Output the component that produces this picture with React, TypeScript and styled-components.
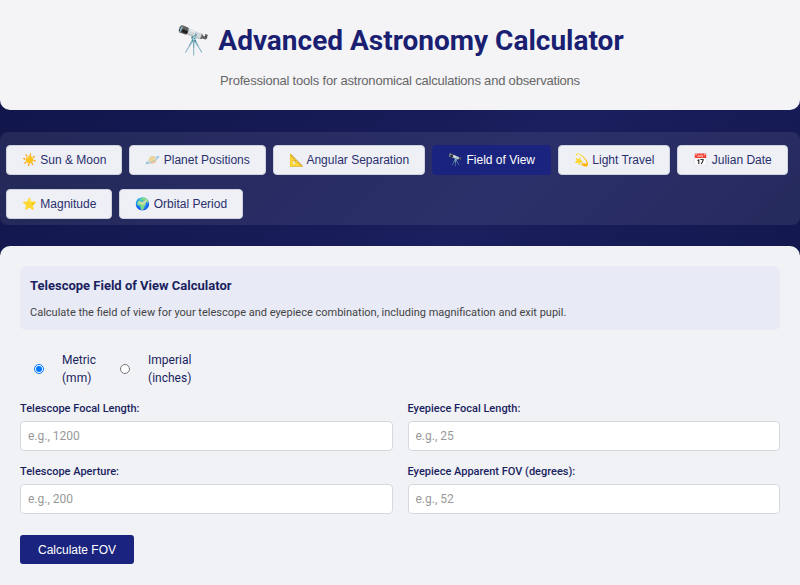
import React from "react";
import styled, { createGlobalStyle } from "styled-components";

const Global = createGlobalStyle`
  html, body { margin: 0; padding: 0; }
  body {
    font-family: Roboto, "Noto Sans", sans-serif;
    background: linear-gradient(135deg, #0f1447 0%, #1a1f5e 50%, #0c1240 100%);
    min-height: 585px;
  }
`;

const Header = styled.header`
  background: #f4f4f7;
  border-radius: 0 0 10px 10px;
  height: 110px;
  box-sizing: border-box;
  padding-top: 22px;
  text-align: center;
`;
const Title = styled.h1`
  margin: 0;
  font-size: 28px;
  font-weight: 700;
  color: #1a1f71;
  line-height: 38px;
`;
const Subtitle = styled.p`
  margin: 13px 0 0;
  font-size: 13px;
  letter-spacing: -0.2px;
  color: #666;
  font-family: "Liberation Sans", Arial, sans-serif;
`;
const TabBar = styled.nav`
  margin-top: 22px;
  background: rgba(255, 255, 255, 0.08);
  border-radius: 8px;
  padding: 13px 6px 6px;
  display: flex;
  flex-wrap: wrap;
  gap: 13px 7px;
  height: 93px;
  box-sizing: border-box;
`;
const Tab = styled.button<{ $active?: boolean }>`
  height: 30px;
  padding: 0 15px;
  border-radius: 4px;
  border: 1px solid ${p => (p.$active ? "#1a237e" : "#cfd2dc")};
  background: ${p => (p.$active ? "#1a237e" : "#eef0f5")};
  color: ${p => (p.$active ? "#fff" : "#2a2f6e")};
  font-family: "Liberation Sans", Arial, sans-serif;
  font-size: 12px;
  cursor: pointer;
`;
const Main = styled.main`
  margin-top: 21px;
  background: #f1f2f6;
  border-radius: 10px 10px 0 0;
  padding: 20px 20px 20px;
  min-height: 339px;
  box-sizing: border-box;
`;
const Info = styled.section`
  background: #e8eaf6;
  border-radius: 6px;
  padding: 12px 10px 10px;
  height: 64px;
  box-sizing: border-box;
`;
const InfoTitle = styled.h2`
  margin: 0;
  font-size: 13px;
  font-weight: 700;
  color: #1a1f5e;
`;
const InfoText = styled.p`
  margin: 13px 0 0;
  font-size: 11px;
  color: #444;
`;
const Radios = styled.div`
  display: flex;
  align-items: center;
  padding: 17px 0 0 14px;
  height: 44px;
`;
const RadioLabel = styled.label`
  display: flex;
  align-items: center;
  font-size: 12px;
  color: #1a1f5e;
  line-height: 18px;
  margin-right: 24px;
  input { margin: 0 18px 0 0; width: 10px; height: 10px; }
`;
const Grid = styled.div`
  display: grid;
  grid-template-columns: 1fr 1fr;
  gap: 14px 15px;
  margin-top: 11px;
`;
const Field = styled.div`
  display: flex;
  flex-direction: column;
  gap: 6px;
`;
const Label = styled.label`
  font-size: 11px;
  font-weight: 500;
  color: #1a1f5e;
`;
const Input = styled.input`
  height: 30px;
  box-sizing: border-box;
  border: 1px solid #d6d8e0;
  border-radius: 4px;
  background: #fff;
  padding: 0 7px;
  font-family: Roboto, sans-serif;
  font-size: 12px;
  &::placeholder { color: #999; }
`;
const Button = styled.button`
  margin-top: 21px;
  height: 29px;
  width: 114px;
  background: #1a237e;
  color: #fff;
  border: none;
  border-radius: 3px;
  font-family: "Liberation Sans", Arial, sans-serif;
  font-size: 12px;
`;

const tabs = ["☀️ Sun & Moon", "🪐 Planet Positions", "📐 Angular Separation", "🔭 Field of View", "💫 Light Travel", "📅 Julian Date", "⭐ Magnitude", "🌍 Orbital Period"];

export default function App() {
  return (
    <>
      <Global />
      <Header>
        <Title>🔭 Advanced Astronomy Calculator</Title>
        <Subtitle>Professional tools for astronomical calculations and observations</Subtitle>
      </Header>
      <TabBar>
        {tabs.map(t => <Tab key={t} $active={t.includes("Field")}>{t}</Tab>)}
      </TabBar>
      <Main>
        <Info>
          <InfoTitle>Telescope Field of View Calculator</InfoTitle>
          <InfoText>Calculate the field of view for your telescope and eyepiece combination, including magnification and exit pupil.</InfoText>
        </Info>
        <Radios>
          <RadioLabel><input type="radio" name="u" defaultChecked /><span>Metric<br />(mm)</span></RadioLabel>
          <RadioLabel><input type="radio" name="u" /><span>Imperial<br />(inches)</span></RadioLabel>
        </Radios>
        <Grid>
          <Field><Label>Telescope Focal Length:</Label><Input placeholder="e.g., 1200" /></Field>
          <Field><Label>Eyepiece Focal Length:</Label><Input placeholder="e.g., 25" /></Field>
          <Field><Label>Telescope Aperture:</Label><Input placeholder="e.g., 200" /></Field>
          <Field><Label>Eyepiece Apparent FOV (degrees):</Label><Input placeholder="e.g., 52" /></Field>
        </Grid>
        <Button>Calculate FOV</Button>
      </Main>
    </>
  );
}
